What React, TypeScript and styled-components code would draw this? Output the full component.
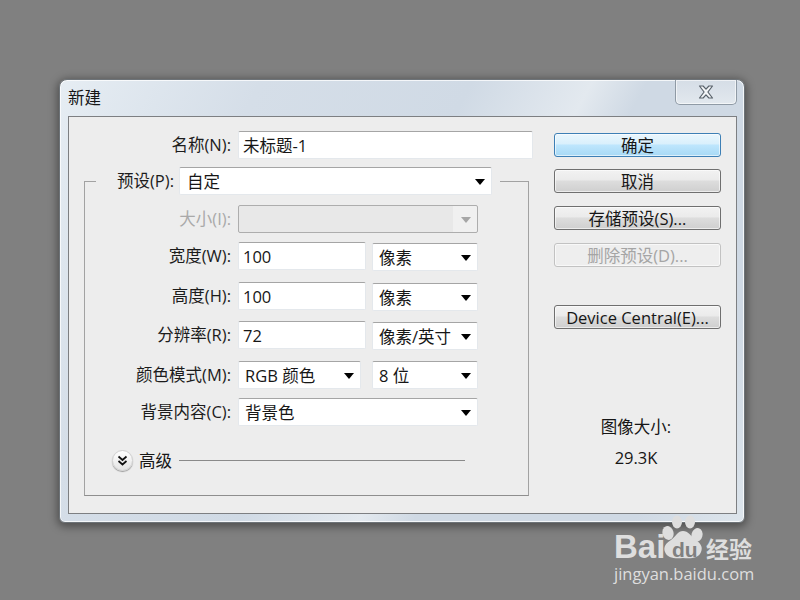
import React from 'react';
import styled, { createGlobalStyle } from 'styled-components';

const GlobalStyle = createGlobalStyle`
  html, body {
    margin: 0;
    width: 800px;
    height: 600px;
    overflow: hidden;
    background: #808080;
  }
  body {
    font-family: "Open Sans", "Noto Sans CJK SC", sans-serif;
    font-size: 16.5px;
    color: #161616;
  }
`;

const Page = styled.div`
  position: relative;
  box-sizing: border-box;
  width: 800px;
  height: 600px;
  padding: 79px 0 0 59px;
  background: #808080;
`;

const DialogWindow = styled.div`
  box-sizing: border-box;
  width: 686px;
  height: 444px;
  padding: 0 7px 8px 8px;
  display: flex;
  flex-direction: column;
  border: 1px solid #6d7378;
  border-radius: 8px 8px 6px 6px;
  background: linear-gradient(118deg, #e6edf3 0%, #d5dee8 22%, #d0dae5 45%, #e3e9ef 58%, #cfd9e4 64%, #cfd9e4 88%, #dde5ec 100%);
  box-shadow: 0 2px 9px 2px rgba(0, 0, 0, 0.38), inset 0 0 0 1px rgba(255, 255, 255, 0.75);
`;

const TitleBar = styled.div`
  height: 36px;
  flex: none;
  display: flex;
  justify-content: space-between;
  align-items: flex-start;
`;

const Title = styled.span`
  margin-top: 7px;
  line-height: 22px;
`;

const CloseButton = styled.div`
  box-sizing: border-box;
  width: 62px;
  height: 25px;
  display: flex;
  align-items: center;
  justify-content: center;
  border: 1px solid #8f9aa5;
  border-top: none;
  border-radius: 0 0 5px 5px;
  background: linear-gradient(#d5dde6, #e2e8ee);
  box-shadow: inset 0 0 0 1px rgba(255, 255, 255, 0.6);
`;

const Panel = styled.div`
  flex: 1;
  display: flex;
  box-sizing: border-box;
  border: 1px solid #7d7f82;
  background: #ededed;
  padding: 14px 0 0 15px;
`;

const LeftColumn = styled.div`
  width: 445px;
  flex: none;
`;

const Row = styled.div<{ $top?: number }>`
  display: flex;
  align-items: flex-start;
  margin-top: ${p => p.$top ?? 0}px;
`;

const Label = styled.label<{ $disabled?: boolean; $width?: number }>`
  box-sizing: border-box;
  width: ${p => p.$width ?? 147}px;
  flex: none;
  height: 28px;
  line-height: 28px;
  text-align: right;
  white-space: nowrap;
  color: ${p => (p.$disabled ? '#a9a9a9' : '#1c1c1c')};
`;

const Field = styled.div<{ $width: number; $left?: number; $shift?: number; $disabled?: boolean; $inset?: number }>`
  position: relative;
  box-sizing: border-box;
  width: ${p => p.$width}px;
  height: 28px;
  flex: none;
  margin-left: ${p => p.$left ?? 7}px;
  margin-top: ${p => p.$shift ?? 0}px;
  padding-left: ${p => p.$inset ?? 6}px;
  line-height: 27px;
  white-space: nowrap;
  border-radius: 2px;
  background: ${p => (p.$disabled ? 'linear-gradient(to right, #e8e8e8 calc(100% - 24px), #f0f0f0 calc(100% - 24px))' : '#ffffff')};
  border: 1px solid ${p => (p.$disabled ? '#adadad' : '#e4e8ec')};
  border-top-color: ${p => (p.$disabled ? '#adadad' : '#a5a5a5')};
`;

const Caret = styled.i<{ $disabled?: boolean }>`
  position: absolute;
  right: 6px;
  top: 11px;
  width: 0;
  height: 0;
  border-left: 5px solid transparent;
  border-right: 5px solid transparent;
  border-top: 6px solid ${p => (p.$disabled ? '#a6a6a6' : '#000000')};
`;

const Preset = styled.fieldset`
  box-sizing: border-box;
  height: 329px;
  margin: 8px 0 0;
  padding: 0;
  border: 1px solid #a2a2a2;
  border-bottom-color: #8e8e8e;
`;

const PresetLegend = styled.legend`
  display: flex;
  margin-left: 11px;
  padding: 0 8px 0 0;
`;

const FieldsetBody = styled.div`
  margin-left: -1px;
  padding-top: 10px;
`;

const Advanced = styled.div`
  display: flex;
  align-items: center;
  margin: 20px 0 0 28px;
  height: 28px;
`;

const RoundToggle = styled.div`
  box-sizing: border-box;
  width: 21px;
  height: 21px;
  display: flex;
  align-items: center;
  justify-content: center;
  border-radius: 50%;
  background: linear-gradient(#ffffff, #e4e4e4);
  border: 1px solid #d0d0d0;
  box-shadow: 0 1px 1px rgba(0, 0, 0, 0.35);
`;

const AdvancedText = styled.span`
  margin-left: 6px;
`;

const AdvancedLine = styled.div`
  width: 286px;
  height: 1px;
  margin-left: 7px;
  background: #8a8a8a;
`;

const RightColumn = styled.div`
  width: 167px;
  margin-left: 25px;
  padding-top: 2px;
  display: flex;
  flex-direction: column;
  align-items: center;
`;

const Button = styled.div<{ $variant?: 'primary' | 'disabled'; $top?: number }>`
  box-sizing: border-box;
  width: 167px;
  height: 24px;
  flex: none;
  margin-top: ${p => p.$top ?? 0}px;
  line-height: 23px;
  text-align: center;
  white-space: nowrap;
  border-radius: 3px;
  color: ${p => (p.$variant === 'disabled' ? '#a5a5a5' : '#161616')};
  border: 1px solid ${p => (p.$variant === 'primary' ? '#3d7fb5' : p.$variant === 'disabled' ? '#c2c2c2' : '#6f6f6f')};
  background: ${p =>
    p.$variant === 'primary'
      ? 'linear-gradient(#eaf6fd 0%, #d9f0fc 45%, #bee6fd 50%, #a7d9f5 100%)'
      : p.$variant === 'disabled'
        ? '#eeeeee'
        : 'linear-gradient(#f2f2f2 0%, #ebebeb 45%, #dddddd 50%, #cfcfcf 100%)'};
  box-shadow: inset 0 0 0 1px rgba(255, 255, 255, 0.6);
`;

const SizeInfo = styled.div`
  margin-top: 87px;
  padding-right: 3px;
  display: flex;
  flex-direction: column;
  align-items: center;
  gap: 9px;
  line-height: 22px;
`;

const Watermark = styled.div`
  position: absolute;
  left: 613px;
  top: 514px;
  width: 150px;
  height: 72px;
  color: #dedede;
`;

const BaiText = styled.span`
  position: absolute;
  left: 1px;
  top: 15px;
  font: bold 33px/36px "Liberation Sans", sans-serif;
`;

const PawIcon = styled.svg`
  position: absolute;
  left: 49px;
  top: 0;
`;

const DuText = styled.span`
  position: absolute;
  left: 59px;
  top: 24px;
  color: #808080;
  font: bold 21px/24px "Liberation Sans", sans-serif;
`;

const JingyanText = styled.span`
  position: absolute;
  left: 93px;
  top: 21px;
  font: bold 23px/26px "Noto Sans CJK SC", sans-serif;
`;

const SiteText = styled.span`
  position: absolute;
  left: 1px;
  top: 49px;
  font: 16.5px/22px "Open Sans", sans-serif;
  white-space: nowrap;
`;

const App = () => {
  return (
    <Page>
      <GlobalStyle />
      <DialogWindow>
        <TitleBar>
          <Title>新建</Title>
          <CloseButton>
            <svg width="16" height="14" viewBox="0 0 16 14">
              <path
                d="M1.5 1h3.6L8 4.2 10.9 1h3.6l-4.6 6 4.6 6h-3.6L8 9.8 5.1 13H1.5l4.6-6z"
                fill="#f4f6f8"
                stroke="#59626b"
                strokeWidth="1.2"
                strokeLinejoin="round"
              />
            </svg>
          </CloseButton>
        </TitleBar>
        <Panel>
          <LeftColumn>
            <Row>
              <Label>名称(N):</Label>
              <Field $width={295} $inset={4}>未标题-1</Field>
            </Row>
            <Preset>
              <PresetLegend>
                <Label $width={78}>预设(P):</Label>
                <Field $width={313} $left={5} $inset={7}>
                  自定
                  <Caret />
                </Field>
              </PresetLegend>
              <FieldsetBody>
                <Row>
                  <Label $disabled>大小(I):</Label>
                  <Field $width={240} $disabled>
                    <Caret $disabled />
                  </Field>
                </Row>
                <Row $top={9}>
                  <Label>宽度(W):</Label>
                  <Field $width={128} $inset={4}>100</Field>
                  <Field $width={106} $left={6} $shift={1}>
                    像素
                    <Caret />
                  </Field>
                </Row>
                <Row $top={11}>
                  <Label>高度(H):</Label>
                  <Field $width={128} $inset={4}>100</Field>
                  <Field $width={106} $left={6} $shift={1}>
                    像素
                    <Caret />
                  </Field>
                </Row>
                <Row $top={10}>
                  <Label>分辨率(R):</Label>
                  <Field $width={128} $inset={4}>72</Field>
                  <Field $width={106} $left={6} $shift={1}>
                    像素/英寸
                    <Caret />
                  </Field>
                </Row>
                <Row $top={11}>
                  <Label>颜色模式(M):</Label>
                  <Field $width={123}>
                    RGB 颜色
                    <Caret />
                  </Field>
                  <Field $width={106} $left={11}>
                    8 位
                    <Caret />
                  </Field>
                </Row>
                <Row $top={9}>
                  <Label>背景内容(C):</Label>
                  <Field $width={240}>
                    背景色
                    <Caret />
                  </Field>
                </Row>
                <Advanced>
                  <RoundToggle>
                    <svg width="11" height="11" viewBox="0 0 11 11">
                      <path d="M1.5 1.5 5.5 5l4-3.5M1.5 6 5.5 9.5l4-3.5" fill="none" stroke="#111" strokeWidth="1.7" />
                    </svg>
                  </RoundToggle>
                  <AdvancedText>高级</AdvancedText>
                  <AdvancedLine />
                </Advanced>
              </FieldsetBody>
            </Preset>
          </LeftColumn>
          <RightColumn>
            <Button $variant="primary">确定</Button>
            <Button $top={12}>取消</Button>
            <Button $top={13}>存储预设(S)...</Button>
            <Button $variant="disabled" $top={13}>删除预设(D)...</Button>
            <Button $top={38}>Device Central(E)...</Button>
            <SizeInfo>
              <span>图像大小:</span>
              <span>29.3K</span>
            </SizeInfo>
          </RightColumn>
        </Panel>
      </DialogWindow>
      <Watermark>
        <BaiText>Bai</BaiText>
        <PawIcon width="44" height="46" viewBox="0 0 44 46">
          <g fill="#dedede">
            <ellipse cx="15" cy="8" rx="5" ry="6.5" />
            <ellipse cx="28" cy="8" rx="5" ry="6.5" />
            <ellipse cx="6" cy="19" rx="5.5" ry="7" transform="rotate(-15 6 19)" />
            <ellipse cx="35" cy="21" rx="5.5" ry="7" transform="rotate(15 35 21)" />
            <path d="M21 17c5 0 8 5 13 9 5 4 7 7 5 12-2 6-10 7-18 6-8 1-16 0-18-6-2-5 1-9 6-12 5-4 7-9 12-9z" />
          </g>
        </PawIcon>
        <DuText>du</DuText>
        <JingyanText>经验</JingyanText>
        <SiteText>jingyan.baidu.com</SiteText>
      </Watermark>
    </Page>
  );
};

export default App;
